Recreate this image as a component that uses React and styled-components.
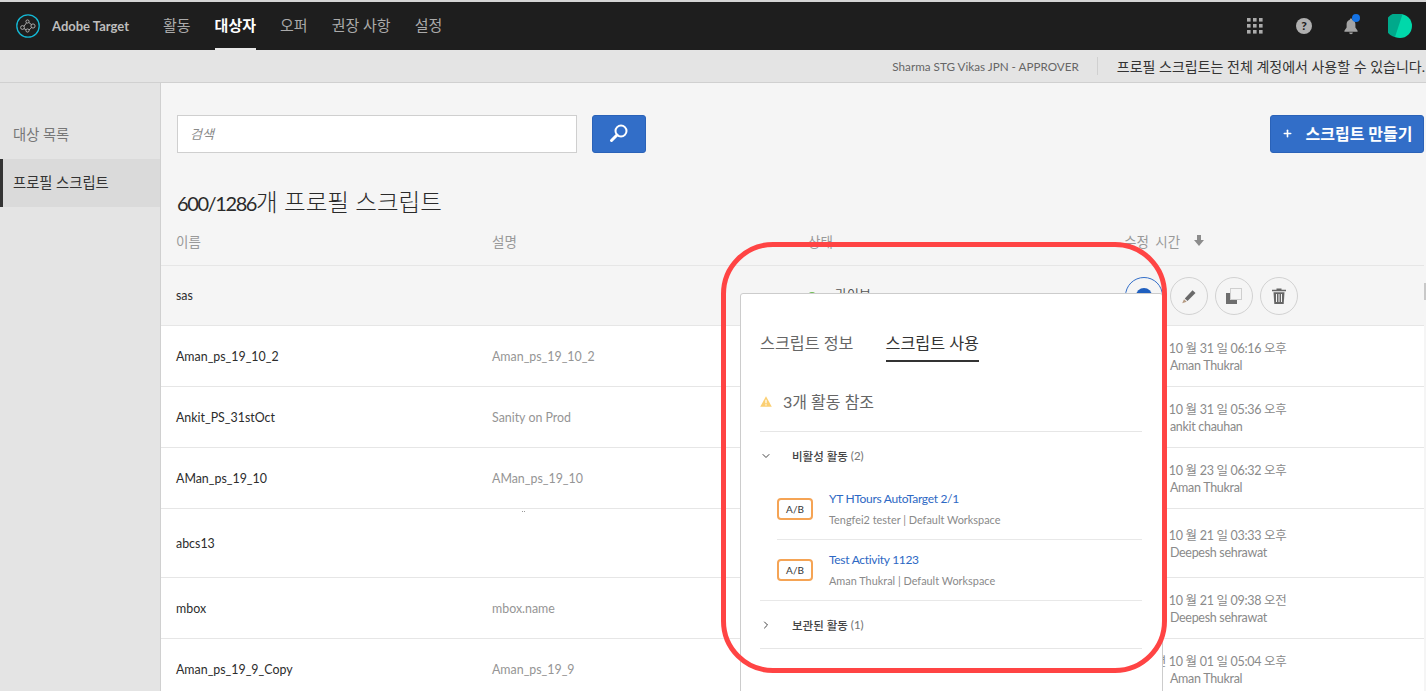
import styled, { createGlobalStyle } from 'styled-components';
import { ChevronDown, ChevronRight, Plus } from 'lucide-react';

const FONT = `Lato, 'Noto Sans CJK KR', sans-serif`;

const GlobalStyle = createGlobalStyle`
  html, body {
    margin: 0;
    height: 691px;
    overflow: hidden;
    background: #f5f5f5;
    font-family: ${FONT};
  }
  * { box-sizing: border-box; }
`;

const Page = styled.div`
  position: relative;
  width: 1426px;
  height: 691px;
  overflow: hidden;
  display: flex;
  flex-direction: column;
`;

/* top bar */
const TopBar = styled.header`
  height: 50px;
  flex: none;
  display: flex;
  align-items: center;
  padding: 0 14px 0 16px;
  background: #1e1e1e;
  border-top: 2px solid #d4d4d4;
`;

const Brand = styled.div`
  display: flex;
  align-items: center;
  gap: 12px;
  width: 147px;
  color: #bdbdbd;
  font-size: 13px;
  font-weight: 700;
  white-space: nowrap;
`;

const Nav = styled.nav`
  display: flex;
  align-self: stretch;
  gap: 24px;
  flex: 1;
`;

const NavItem = styled.a`
  display: flex;
  align-items: center;
  height: 48px;
  padding-bottom: 2px;
  font-size: 15px;
  color: ${p => (p.$active ? '#fff' : '#aaa')};
  font-weight: ${p => (p.$active ? 700 : 400)};
  border-bottom: 2px solid ${p => (p.$active ? '#e8e8e8' : 'transparent')};
`;

const TopIcons = styled.div`
  display: flex;
  align-items: center;
`;

const HelpBadge = styled.span`
  width: 16px;
  height: 16px;
  margin: 0 32px 0 33px;
  border-radius: 50%;
  background: #b0b0b0;
  color: #1e1e1e;
  font-size: 12px;
  font-weight: 900;
  line-height: 16px;
  text-align: center;
`;

const BellWrap = styled.span`
  position: relative;
  display: flex;
  margin-right: 30px;
  &::after {
    content: '';
    position: absolute;
    top: -4px;
    right: -2px;
    width: 8px;
    height: 8px;
    border-radius: 50%;
    background: #1473e6;
  }
`;

/* sub bar */
const SubBar = styled.div`
  height: 33px;
  flex: none;
  display: flex;
  align-items: center;
  justify-content: flex-end;
  padding: 0 1px 0 0;
  background: #e4e4e4;
  border-bottom: 1px solid #d0d0d0;
`;

const UserName = styled.span`
  font-size: 11.7px;
  color: #666;
  padding-right: 18px;
  margin-right: 19px;
  border-right: 1px solid #d0d0d0;
  line-height: 18px;
  white-space: nowrap;
`;

const Notice = styled.span`
  font-size: 14px;
  color: #333;
  white-space: nowrap;
`;

const Layout = styled.div`
  flex: 1;
  display: flex;
  min-height: 0;
`;

/* side menu */
const Sidebar = styled.aside`
  width: 161px;
  flex: none;
  padding-top: 28px;
  background: #e4e4e4;
  border-right: 1px solid #d0d0d0;
`;

const SideItem = styled.div`
  height: 48px;
  display: flex;
  align-items: center;
  padding: 0 0 3px ${p => (p.$active ? '10px' : '13px')};
  font-size: 14.3px;
  color: ${p => (p.$active ? '#333' : '#777')};
  background: ${p => (p.$active ? '#dadada' : 'transparent')};
  border-left: ${p => (p.$active ? '3px solid #333' : 'none')};
`;

/* main */
const Main = styled.main`
  flex: 1;
  min-width: 0;
  padding: 32px 2px 0 0;
  background: #f5f5f5;
`;

const Toolbar = styled.div`
  display: flex;
  align-items: center;
  padding-left: 16px;
`;

const SearchInput = styled.div`
  width: 400px;
  height: 38px;
  display: flex;
  align-items: center;
  padding: 0 0 2px 12px;
  background: #fff;
  border: 1px solid #cfcfcf;
  font-size: 13px;
  font-style: italic;
  color: #8a8a8a;
`;

const BlueButton = styled.button`
  height: 38px;
  display: flex;
  align-items: center;
  justify-content: center;
  padding: 0 0 2px;
  color: #fff;
  background: #326ec8;
  border: 1px solid #2a62b8;
  border-radius: 3px;
  font-family: ${FONT};
  font-size: 16px;
  font-weight: 700;
`;

const SearchButton = styled(BlueButton)`
  width: 54px;
  margin-left: 15px;
`;

const CreateButton = styled(BlueButton)`
  width: 154px;
  margin-left: auto;
  gap: 13px;
`;

const Title = styled.h1`
  margin: 36px 0 0 16px;
  height: 27px;
  font-size: 23.5px;
  line-height: 27px;
  font-weight: 300;
  color: #2a2a2a;
`;

const TitleCount = styled.span`
  font-size: 20px;
  font-weight: 400;
  letter-spacing: -1.4px;
`;

const Table = styled.div`
  margin-top: 13px;
`;

const Row = styled.div`
  display: grid;
  grid-template-columns: 316px 316px 316px 1fr;
  align-items: center;
  height: ${p => p.$height}px;
  padding-left: 15px;
  background: ${p => (p.$plain ? 'transparent' : '#fff')};
  border-bottom: 1px solid #e6e6e6;
  font-size: 12.4px;
`;

const HeadRow = styled(Row)`
  padding-bottom: 13px;
`;

const HeadCell = styled.div`
  display: flex;
  align-items: center;
  gap: 14px;
  color: #999;
  font-size: 13.5px;
  word-spacing: 3px;
`;

const NameCell = styled.div`
  color: #2c2c2c;
`;

const DescCell = styled.div`
  color: #959595;
`;

const StatusCell = styled.div`
  display: flex;
  align-items: center;
  gap: 19px;
  margin-top: -4px;
  font-size: 13px;
  color: #555;
`;

const StatusDot = styled.span`
  width: 8px;
  height: 8px;
  margin-top: 4px;
  border-radius: 50%;
  background: #6dbb52;
`;

const TimeCell = styled.div`
  padding-top: 2px;
  font-size: 12.5px;
  line-height: 17px;
  letter-spacing: -0.3px;
  color: #8a8a8a;
  white-space: nowrap;
`;

const AuthorLabel = styled.span`
  font-size: 13px;
  margin-right: 8px;
`;

const Actions = styled.div`
  display: flex;
  gap: 7px;
  padding-left: 1px;
`;

const RoundButton = styled.span`
  width: 38px;
  height: 38px;
  display: flex;
  align-items: center;
  justify-content: center;
  border-radius: 50%;
  background: #f5f5f5;
  border: 1px solid ${p => (p.$selected ? '#326ec8' : '#d2d2d2')};
`;

const InfoDot = styled.span`
  width: 16px;
  height: 16px;
  border-radius: 50%;
  background: #1f5fbf;
`;

const ScrollThumb = styled.span`
  position: absolute;
  top: 283px;
  right: 0;
  width: 2px;
  height: 17px;
  background: #c8c8c8;
`;

const Speck = styled.span`
  position: absolute;
  top: 511px;
  left: 522px;
  width: 4px;
  height: 1px;
  background: repeating-linear-gradient(90deg, #999 0 1px, transparent 1px 2px);
`;

/* popover over the table */
const Popover = styled.section`
  position: absolute;
  left: 740px;
  top: 293px;
  width: 423px;
  height: 420px;
  padding: 0 20px 0 19px;
  background: #fff;
  border: 1px solid #cccccc;
  border-radius: 3px;
`;

const Tabs = styled.div`
  display: flex;
  gap: 32px;
  height: 69px;
  padding-top: 35px;
`;

const Tab = styled.div`
  height: 33px;
  font-size: 16.2px;
  line-height: 27px;
  color: ${p => (p.$active ? '#333' : '#666')};
  border-bottom: 2px solid ${p => (p.$active ? '#333' : 'transparent')};
`;

const Warning = styled.div`
  display: flex;
  align-items: center;
  gap: 11px;
  height: 69px;
  padding-top: 8px;
  font-size: 16px;
  color: #666;
  border-bottom: 1px solid #e6e6e6;
`;

const GroupHead = styled.div`
  display: flex;
  align-items: center;
  height: ${p => p.$height}px;
  font-size: 11.5px;
  font-weight: 500;
  color: #444;
`;

const Twisty = styled.span`
  display: flex;
  width: 32px;
`;

const GroupCount = styled.span`
  margin-left: 3px;
  color: #777;
`;

const Activity = styled.div`
  display: flex;
  align-items: center;
  height: ${p => p.$height}px;
  margin-left: ${p => (p.$outer ? 0 : '17px')};
  padding-left: ${p => (p.$outer ? '17px' : 0)};
  border-bottom: 1px solid #e8e8e8;
`;

const TypeBadge = styled.span`
  width: 36px;
  height: 22px;
  flex: none;
  display: flex;
  align-items: center;
  justify-content: center;
  margin-right: 16px;
  border: 2px solid #f5a455;
  border-radius: 4px;
  font-size: 10px;
  color: #333;
`;

const ActivityText = styled.div`
  padding-bottom: 2px;
`;

const ActivityName = styled.div`
  font-size: 12px;
  line-height: 17px;
  letter-spacing: -0.3px;
  color: #2d68c4;
`;

const ActivityMeta = styled.div`
  margin-top: 5px;
  font-size: 10.9px;
  line-height: 15px;
  color: #8a8a8a;
`;

const GroupEnd = styled.div`
  border-bottom: 1px solid #e6e6e6;
`;

/* red annotation drawn over the screenshot */
const Annotation = styled.div`
  position: absolute;
  left: 721px;
  top: 242px;
  width: 446px;
  height: 431px;
  border: 5px solid #ff4444;
  border-radius: 52px;
  pointer-events: none;
`;

const LogoIcon = () => (
  <svg width="24" height="24" viewBox="0 0 24 24" fill="none">
    <circle cx="12" cy="12" r="11.2" stroke="#14b8d4" strokeWidth="1.3" />
    <g stroke="#c8c8c8" strokeWidth="0.8">
      <circle cx="6.5" cy="13.5" r="1.9" />
      <circle cx="11.5" cy="7.5" r="1.6" />
      <circle cx="11.5" cy="16.5" r="1.6" />
      <circle cx="17" cy="12" r="2.1" />
      <path d="M8 12.3 10.5 8.8M8 14.6l2.2 1.2M12.8 8.5l2.8 2.2M13 16l2.6-2.4" />
    </g>
  </svg>
);

const GridIcon = () => (
  <svg width="16" height="16" viewBox="0 0 16 16" fill="#ababab">
    {[0, 6, 12].flatMap(y =>
      [0, 6, 12].map(x => <rect key={`${x}-${y}`} x={x} y={y} width="3.6" height="3.6" />)
    )}
  </svg>
);

const BellIcon = () => (
  <svg width="14" height="17" viewBox="0 0 14 17" fill="#a4a4a4">
    <path d="M7 .5c-.7 0-1.2.5-1.2 1.2C3.6 2.3 2.6 4 2.6 6.3v3.2L.4 12.7v1h13.2v-1L11.4 9.5V6.3c0-2.3-1-4-3.2-4.6C8.2 1 7.7.5 7 .5z" />
    <path d="M5.2 14.6h3.6c0 1-.8 1.7-1.8 1.7s-1.8-.7-1.8-1.7z" />
  </svg>
);

const AvatarIcon = () => (
  <svg width="24" height="24" viewBox="0 0 24 24">
    <circle cx="12" cy="12" r="12" fill="#00d8aa" />
    <path d="M14.5 .3A12 12 0 1 0 7 22.9z" fill="#00a98b" />
  </svg>
);

const SearchIcon = () => (
  <svg width="20" height="20" viewBox="0 0 20 20" fill="none" stroke="#fff">
    <circle cx="12" cy="8" r="5.5" strokeWidth="2" />
    <path d="M8 12 2.5 17.5" strokeWidth="3" strokeLinecap="round" />
  </svg>
);

const SortIcon = () => (
  <svg width="10" height="11" viewBox="0 0 10 11" fill="#8c8c8c">
    <path d="M3 0h4v5h3l-5 6-5-6h3z" />
  </svg>
);

const PencilIcon = () => (
  <svg width="16" height="16" viewBox="0 0 16 16">
    <path d="M3.8 10.5 11.5 2.3 14.5 5 6.5 13z" fill="#6a6a6a" />
    <path d="M3 11.3 5.7 13.8 1.2 15.2z" fill="#b59a82" />
  </svg>
);

const CloneIcon = () => (
  <svg width="16" height="16" viewBox="0 0 16 16">
    <path d="M0 5h4v7h7v4H0z" fill="#6e6e6e" />
    <rect x="4.5" y=".5" width="11" height="11" fill="none" stroke="#a8a8a8" strokeDasharray="1 1" />
  </svg>
);

const TrashIcon = () => (
  <svg width="14" height="16" viewBox="0 0 14 16">
    <path d="M4.5 1.8V.5h5v1.3H14v1.5H0V1.8z" fill="#666" />
    <path d="M1.5 4.2h11L11.7 16H2.3z" fill="#666" />
    <path d="M4.5 6v8M7 6v8M9.5 6v8" stroke="#f5f5f5" strokeWidth="1" />
  </svg>
);

const WarnIcon = () => (
  <svg width="12" height="11" viewBox="0 0 12 11">
    <path d="M6 .3 11.8 10.7H.2z" fill="#fbcf72" />
    <path d="M6 3.8v3.4M6 8.2v1.2" stroke="#fff" strokeWidth="1.2" />
  </svg>
);

const rows = [
  { name: 'Aman_ps_19_10_2', desc: 'Aman_ps_19_10_2', time: '2019 년 10 월 31 일 06:16 오후', by: 'Aman Thukral', height: 61 },
  { name: 'Ankit_PS_31stOct', desc: 'Sanity on Prod', time: '2019 년 10 월 31 일 05:36 오후', by: 'ankit chauhan', height: 61 },
  { name: 'AMan_ps_19_10', desc: 'AMan_ps_19_10', time: '2019 년 10 월 23 일 06:32 오후', by: 'Aman Thukral', height: 61 },
  { name: 'abcs13', desc: '', time: '2019 년 10 월 21 일 03:33 오후', by: 'Deepesh sehrawat', height: 69 },
  { name: 'mbox', desc: 'mbox.name', time: '2019 년 10 월 21 일 09:38 오전', by: 'Deepesh sehrawat', height: 61 },
  { name: 'Aman_ps_19_9_Copy', desc: 'Aman_ps_19_9', time: '2019 년 10 월 01 일 05:04 오후', by: 'Aman Thukral', height: 61 },
];

export default function App() {
  return (
    <Page>
      <GlobalStyle />
      <TopBar>
        <Brand>
          <LogoIcon />
          Adobe Target
        </Brand>
        <Nav>
          <NavItem>활동</NavItem>
          <NavItem $active>대상자</NavItem>
          <NavItem>오퍼</NavItem>
          <NavItem>권장 사항</NavItem>
          <NavItem>설정</NavItem>
        </Nav>
        <TopIcons>
          <GridIcon />
          <HelpBadge>?</HelpBadge>
          <BellWrap>
            <BellIcon />
          </BellWrap>
          <AvatarIcon />
        </TopIcons>
      </TopBar>

      <SubBar>
        <UserName>Sharma STG Vikas JPN - APPROVER</UserName>
        <Notice>프로필 스크립트는 전체 계정에서 사용할 수 있습니다.</Notice>
      </SubBar>

      <Layout>
        <Sidebar>
          <SideItem>대상 목록</SideItem>
          <SideItem $active>프로필 스크립트</SideItem>
        </Sidebar>

        <Main>
          <Toolbar>
            <SearchInput>검색</SearchInput>
            <SearchButton aria-label="검색">
              <SearchIcon />
            </SearchButton>
            <CreateButton>
              <Plus size={11} strokeWidth={3.5} />
              스크립트 만들기
            </CreateButton>
          </Toolbar>

          <Title>
            <TitleCount>600/1286</TitleCount>개 프로필 스크립트
          </Title>

          <Table>
            <HeadRow $height={37} $plain>
              <HeadCell>이름</HeadCell>
              <HeadCell>설명</HeadCell>
              <HeadCell>상태</HeadCell>
              <HeadCell>
                수정 시간
                <SortIcon />
              </HeadCell>
            </HeadRow>
            <Row $height={60} $plain>
              <NameCell>sas</NameCell>
              <DescCell />
              <StatusCell>
                <StatusDot />
                라이브
              </StatusCell>
              <Actions>
                <RoundButton $selected>
                  <InfoDot />
                </RoundButton>
                <RoundButton>
                  <PencilIcon />
                </RoundButton>
                <RoundButton>
                  <CloneIcon />
                </RoundButton>
                <RoundButton>
                  <TrashIcon />
                </RoundButton>
              </Actions>
            </Row>
            {rows.map(row => (
              <Row key={row.name} $height={row.height}>
                <NameCell>{row.name}</NameCell>
                <DescCell>{row.desc}</DescCell>
                <div />
                <TimeCell>
                  {row.time}
                  <br />
                  <AuthorLabel>작성자:</AuthorLabel>
                  {row.by}
                </TimeCell>
              </Row>
            ))}
          </Table>
        </Main>
      </Layout>

      <ScrollThumb />
      <Speck />

      <Popover>
        <Tabs>
          <Tab>스크립트 정보</Tab>
          <Tab $active>스크립트 사용</Tab>
        </Tabs>
        <Warning>
          <WarnIcon />
          3개 활동 참조
        </Warning>
        <GroupHead $height={47}>
          <Twisty>
            <ChevronDown size={12} strokeWidth={2} color="#444" />
          </Twisty>
          비활성 활동 <GroupCount>(2)</GroupCount>
        </GroupHead>
        <Activity $height={61}>
          <TypeBadge>A/B</TypeBadge>
          <ActivityText>
            <ActivityName>YT HTours AutoTarget 2/1</ActivityName>
            <ActivityMeta>Tengfei2 tester | Default Workspace</ActivityMeta>
          </ActivityText>
        </Activity>
        <Activity $height={61} $outer>
          <TypeBadge>A/B</TypeBadge>
          <ActivityText>
            <ActivityName>Test Activity 1123</ActivityName>
            <ActivityMeta>Aman Thukral | Default Workspace</ActivityMeta>
          </ActivityText>
        </Activity>
        <GroupEnd>
          <GroupHead $height={47}>
            <Twisty>
              <ChevronRight size={12} strokeWidth={2} color="#444" />
            </Twisty>
            보관된 활동 <GroupCount>(1)</GroupCount>
          </GroupHead>
        </GroupEnd>
      </Popover>

      <Annotation />
    </Page>
  );
}
